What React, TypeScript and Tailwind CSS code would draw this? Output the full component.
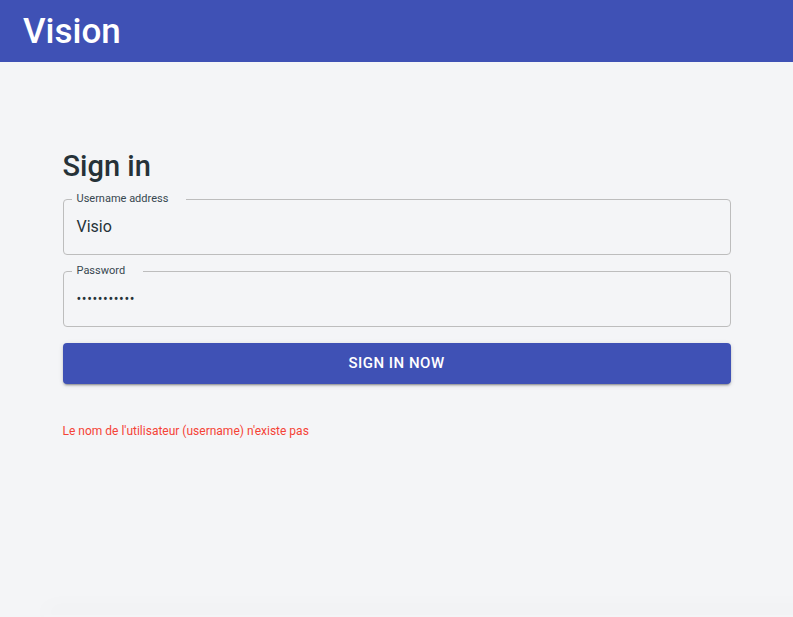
import React from "react"

const font = { fontFamily: "Roboto, 'Liberation Sans', sans-serif" }

function OutlinedField({ label, children }: { label: string; children: React.ReactNode }) {
  return (
    <div className="relative flex h-[56px] items-center rounded-[4px] border border-[#bdbdbd] px-[13px]">
      <span className="absolute -top-[7px] left-[8px] bg-[#f4f5f7] pl-[5px] pr-[18px] text-[11px] leading-[12px] text-[#37474f]">
        {label}
      </span>
      <div className="text-[16px] text-[#263238]">{children}</div>
    </div>
  )
}

export default function App() {
  return (
    <div className="h-[617px] overflow-hidden bg-[#f4f5f7]" style={font}>
      <header className="flex h-[62px] items-center bg-[#3f51b5] px-[23px]">
        <h1 className="text-[35px] font-medium leading-none text-white">Vision</h1>
      </header>
      <main className="mx-auto h-[553px] w-[668px] pt-[86px]">
        <h2 className="mb-[15px] text-[29px] font-medium leading-[36px] text-[#263238]">Sign in</h2>
        <div className="flex flex-col gap-[16px]">
          <OutlinedField label="Username address">Visio</OutlinedField>
          <OutlinedField label="Password">
            <span className="text-[14px] tracking-[0.6px]">•••••••••••</span>
          </OutlinedField>
        </div>
        <button className="mt-[16px] flex h-[41px] w-full items-center justify-center rounded-[4px] bg-[#3f51b5] text-[15px] font-medium uppercase tracking-[0.5px] text-white shadow-[0_3px_1px_-2px_rgba(0,0,0,0.2),0_2px_2px_0_rgba(0,0,0,0.14),0_1px_5px_0_rgba(0,0,0,0.12)]">
          Sign in now
        </button>
        <p className="mt-[38px] text-[12px] text-[#f44336]">
          Le nom de l'utilisateur (username) n'existe pas
        </p>
      </main>
      <div className="ml-[44px] h-[2px] w-[800px] bg-[#f4f5f7] shadow-[0_-4px_22px_rgba(0,0,0,0.14)]" />
    </div>
  )
}
